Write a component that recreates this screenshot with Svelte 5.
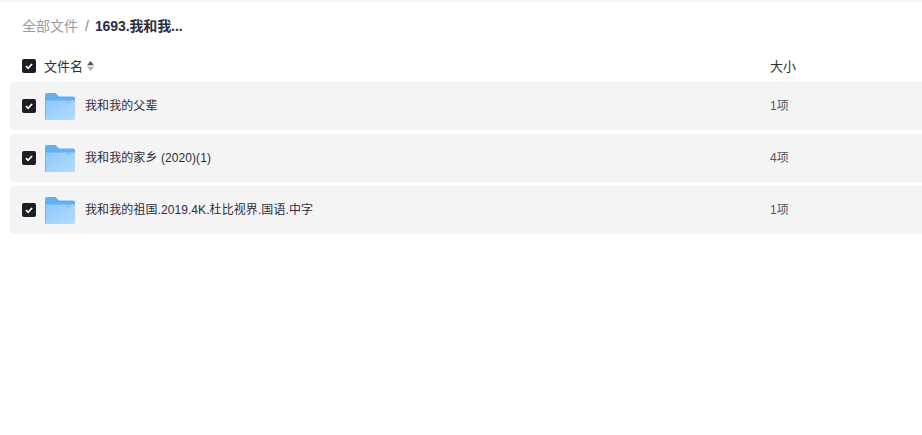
<script>
  const rows = [
    { name: '我和我的父辈', size: '1项' },
    { name: '我和我的家乡 (2020)(1)', size: '4项' },
    { name: '我和我的祖国.2019.4K.杜比视界.国语.中字', size: '1项' }
  ];
</script>

{#snippet check()}
  <svg class="check" viewBox="0 0 14 14" width="14" height="14" aria-hidden="true">
    <rect width="14" height="14" rx="2" fill="#1d1d26" />
    <path d="M4 7.2 6.1 9.3 10 5" fill="none" stroke="#fff" stroke-width="1.8" />
  </svg>
{/snippet}

<div class="page">
  <nav class="crumbs">
    <span class="root">全部文件</span>
    <span class="sep">/</span>
    <span class="current">1693.我和我...</span>
  </nav>

  <header class="head">
    {@render check()}
    <span class="title">文件名</span>
    <svg class="sort" viewBox="0 0 7 10" width="7" height="10" aria-hidden="true">
      <path d="M3.5 0 7 4.3H0Z" fill="#54545e" />
      <path d="M3.5 10 7 5.7H0Z" fill="#b4b4b8" />
    </svg>
    <span class="size-head">大小</span>
  </header>

  <ul class="list">
    {#each rows as row}
      <li class="row">
        {@render check()}
        <svg class="folder" viewBox="0 0 30 27" width="30" height="27" aria-hidden="true">
          <defs>
            <linearGradient id="fg" x1="0" y1="0" x2="1" y2="1">
              <stop offset="0" stop-color="#8cc8fa" />
              <stop offset="1" stop-color="#b4dcfd" />
            </linearGradient>
          </defs>
          <path d="M0 2C0 .8.8 0 2 0H10.5L14 3.5H28C29.2 3.5 30 4.3 30 5.5V9H0Z" fill="#62b0f2" />
          <path d="M0 7.5H30V25C30 26.2 29.2 27 28 27H2C.8 27 0 26.2 0 25Z" fill="url(#fg)" />
          <path d="M0 7V25C0 26 .4 26.6 1 27V7Z" fill="#6cb6f4" />
          <rect x="22" y="8" width="4" height="1.6" fill="#8cbfe9" />
        </svg>
        <span class="name">{row.name}</span>
        <span class="size">{row.size}</span>
      </li>
    {/each}
  </ul>
</div>

<style>
  :global(body) {
    margin: 0;
    background: #fff;
    overflow: hidden;
  }
  .page {
    width: 922px;
    height: 435px;
    box-sizing: border-box;
    border-top: 2px solid #f5f5f6;
    padding-left: 10px;
    font-family: "Liberation Sans", "Noto Sans CJK SC", sans-serif;
    color: #2d2d3c;
    overflow: hidden;
  }
  .crumbs {
    display: flex;
    align-items: center;
    height: 46px;
    margin-bottom: 2px;
    padding-left: 12px;
    font-size: 14px;
  }
  .root {
    color: #9b9ba3;
  }
  .sep {
    margin: 2px 6px 0 7px;
    color: #85858d;
  }
  .current {
    font-weight: 700;
    letter-spacing: -0.1px;
    color: #2d2d3c;
  }
  .head {
    display: flex;
    align-items: center;
    height: 32px;
    padding-left: 12px;
    font-size: 13px;
  }
  .title {
    margin-left: 8px;
    margin-bottom: 2px;
  }
  .sort {
    margin-left: 4px;
  }
  .size-head {
    position: absolute;
    left: 770px;
    margin-bottom: 2px;
  }
  .list {
    list-style: none;
    margin: 0;
    padding: 0;
    display: flex;
    flex-direction: column;
    gap: 4px;
  }
  .row {
    display: flex;
    align-items: center;
    width: 940px;
    height: 48px;
    padding-left: 12px;
    box-sizing: border-box;
    background: #f4f4f5;
    border-radius: 4px;
    font-size: 12px;
    color: #2d2d3c;
    position: relative;
  }
  .folder {
    margin-left: 9px;
    margin-top: 1px;
  }
  .name {
    margin-left: 10px;
    margin-bottom: 4px;
    letter-spacing: 0.08px;
  }
  .size {
    position: absolute;
    left: 760px;
    margin-bottom: 4px;
    color: #55555c;
  }
</style>
